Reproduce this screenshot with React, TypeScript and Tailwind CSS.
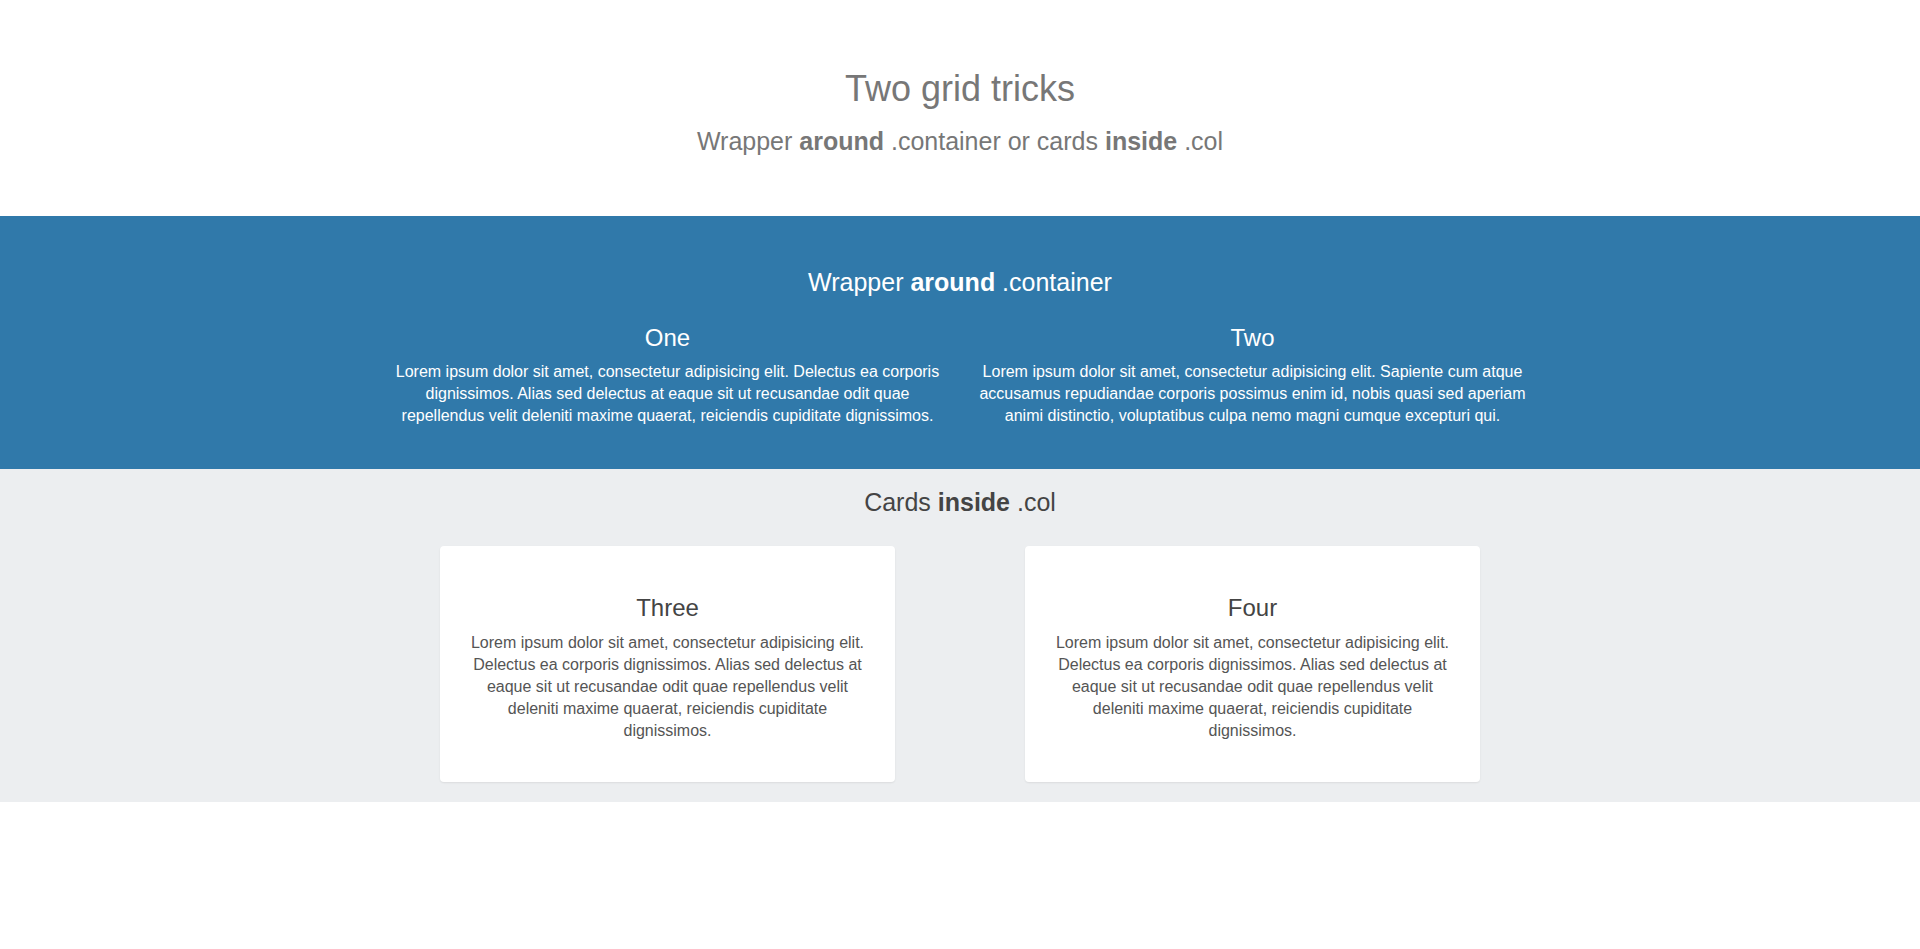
const lorem1 =
  "Lorem ipsum dolor sit amet, consectetur adipisicing elit. Delectus ea corporis dignissimos. Alias sed delectus at eaque sit ut recusandae odit quae repellendus velit deleniti maxime quaerat, reiciendis cupiditate dignissimos.";
const lorem2 =
  "Lorem ipsum dolor sit amet, consectetur adipisicing elit. Sapiente cum atque accusamus repudiandae corporis possimus enim id, nobis quasi sed aperiam animi distinctio, voluptatibus culpa nemo magni cumque excepturi qui.";

function BlueCol({ title, text }: { title: string; text: string }) {
  return (
    <div className="px-[15px] text-center">
      <h4 className="text-[24px] leading-[28px]">{title}</h4>
      <p className="mt-[9.5px] text-[16px] leading-[22px]">{text}</p>
    </div>
  );
}

function Card({ title, text }: { title: string; text: string }) {
  return (
    <div className="px-[65px]">
      <div className="rounded bg-white px-[27px] pt-[48px] pb-[40px] text-center shadow-[0_1px_2px_rgba(0,0,0,0.08)]">
        <h4 className="text-[24px] leading-[28px] text-[#444]">{title}</h4>
        <p className="mt-[9.5px] text-[16px] leading-[22px] text-[#555]">{text}</p>
      </div>
    </div>
  );
}

export default function App() {
  return (
    <div className="min-h-screen bg-white font-['Liberation_Sans',Arial,sans-serif]">
      <header className="pt-[69px] pb-[59px] text-center text-[#777]">
        <h1 className="text-[36px] leading-[40px]">Two grid tricks</h1>
        <h3 className="mt-[16px] text-[25px] leading-[32px]">
          Wrapper <b>around</b> .container or cards <b>inside</b> .col
        </h3>
      </header>

      <section className="bg-[#3079aa] pt-[50px] pb-[42px] text-white">
        <h3 className="text-center text-[25px] leading-[32px]">
          Wrapper <b>around</b> .container
        </h3>
        <div className="mx-auto mt-[25.5px] grid w-[1170px] grid-cols-2">
          <BlueCol title="One" text={lorem1} />
          <BlueCol title="Two" text={lorem2} />
        </div>
      </section>

      <section className="bg-[#eceef0] pt-[17px] pb-[20px] text-[#444]">
        <h3 className="text-center text-[25px] leading-[32px]">
          Cards <b>inside</b> .col
        </h3>
        <div className="mx-auto mt-[28px] grid w-[1170px] grid-cols-2">
          <Card title="Three" text={lorem1} />
          <Card title="Four" text={lorem1} />
        </div>
      </section>
    </div>
  );
}
